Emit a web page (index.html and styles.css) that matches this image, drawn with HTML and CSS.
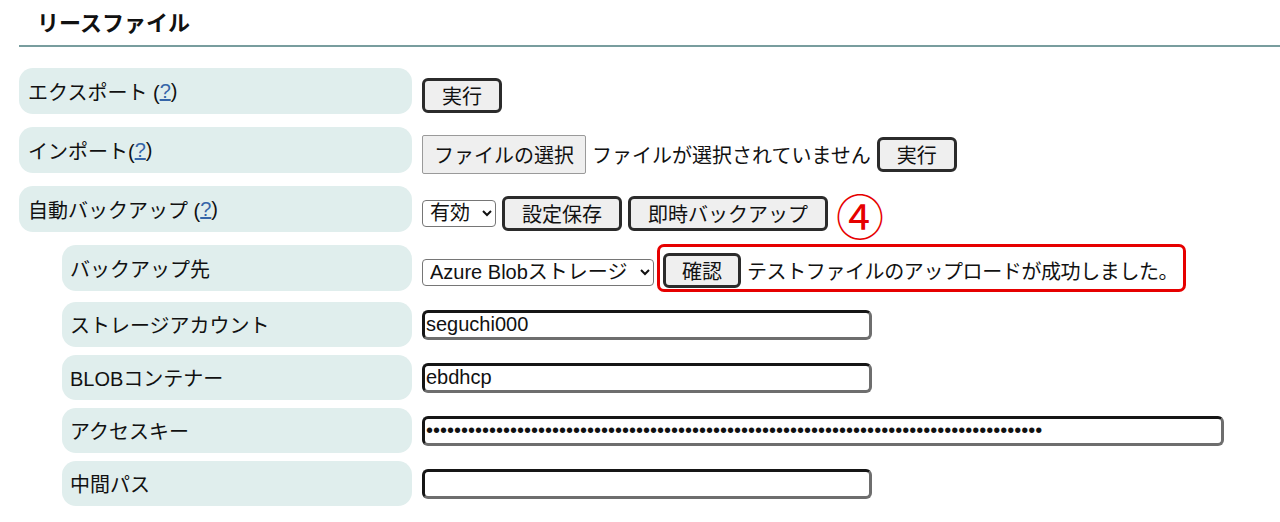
FILE: index.html
```html
<!DOCTYPE html>
<html lang="ja">
<head>
    <meta charset="UTF-8">
    <meta name="viewport" content="width=device-width, initial-scale=1.0">
    <title>リースファイル</title>
    <link rel="stylesheet" href="styles.css">
</head>
<body>
    <h2 class="page-title">リースファイル</h2>

    <div class="settings">
        <div class="row top">
            <div class="label">エクスポート (<a href="#" class="help">?</a>)</div>
            <div class="controls shifted">
                <button class="btn">実行</button>
            </div>
        </div>

        <div class="row top">
            <div class="label">インポート(<a href="#" class="help">?</a>)</div>
            <div class="controls shifted">
                <button class="file-btn">ファイルの選択</button>
                <span>ファイルが選択されていません</span>
                <button class="btn">実行</button>
            </div>
        </div>

        <div class="row top">
            <div class="label">自動バックアップ (<a href="#" class="help">?</a>)</div>
            <div class="controls shifted">
                <select class="sel">
                    <option>有効</option>
                    <option>無効</option>
                </select>
                <button class="btn">設定保存</button>
                <button class="btn">即時バックアップ</button>
                <span class="marker">④</span>
            </div>
        </div>

        <div class="row top sub">
            <div class="label">バックアップ先</div>
            <div class="controls shifted">
                <select class="sel">
                    <option>Azure Blobストレージ</option>
                </select>
                <span class="callout">
                    <button class="btn">確認</button>
                    <span class="callout-text">テストファイルのアップロードが成功しました。</span>
                </span>
            </div>
        </div>

        <div class="row sub first-field">
            <div class="label">ストレージアカウント</div>
            <div class="controls">
                <input type="text" class="field" value="seguchi000">
            </div>
        </div>

        <div class="row sub">
            <div class="label">BLOBコンテナー</div>
            <div class="controls">
                <input type="text" class="field" value="ebdhcp">
            </div>
        </div>

        <div class="row sub">
            <div class="label">アクセスキー</div>
            <div class="controls">
                <input type="password" class="field wide" value="xxxxxxxxxxxxxxxxxxxxxxxxxxxxxxxxxxxxxxxxxxxxxxxxxxxxxxxxxxxxxxxxxxxxxxxxxxxxxxxxxxxxxxxx">
            </div>
        </div>

        <div class="row sub">
            <div class="label">中間パス</div>
            <div class="controls">
                <input type="text" class="field" value="">
            </div>
        </div>
    </div>
</body>
</html>
```

FILE: styles.css
```css
body {
    margin: 0;
    font-family: "Liberation Sans", "Noto Sans CJK JP", sans-serif;
    font-size: 20px;
    color: #111;
    background: #fff;
}

.page-title {
    margin: 0 0 0 19px;
    padding: 10px 0 7px 18px;
    font-size: 22px;
    line-height: 28px;
    font-weight: bold;
    border-bottom: 2px solid #789d9e;
}

.settings {
    padding: 21px 0 0 19px;
}

.row {
    display: flex;
    align-items: flex-start;
    margin-top: 8px;
}

.row.top {
    margin-top: 13px;
}

.row.top:first-child {
    margin-top: 0;
}

.row.first-field {
    margin-top: 11px;
}

.label {
    width: 384px;
    height: 45px;
    padding-left: 9px;
    display: flex;
    align-items: center;
    background: #e0eeed;
    border-radius: 14px;
    white-space: nowrap;
}

.row.top .label {
    height: 46px;
}

.row.sub .label {
    margin-left: 43px;
    width: 342px;
    padding-left: 8px;
}

.help {
    color: #3565a8;
    text-decoration: underline;
}

.controls {
    display: flex;
    align-items: center;
    gap: 6px;
    height: 45px;
    box-sizing: border-box;
    margin-left: 10px;
    white-space: nowrap;
}

.controls.shifted {
    height: 46px;
    padding-top: 8px;
}

.btn {
    font: inherit;
    color: #111;
    height: 35px;
    padding: 0 17px;
    background: #efefef;
    border: 3px solid #2b2b2b;
    border-radius: 6px;
}

.file-btn {
    font: inherit;
    color: #111;
    height: 39px;
    padding: 0 11px;
    background: #efefef;
    border: 1px solid #9a9a9a;
    border-radius: 2px;
}

.sel {
    font: inherit;
    color: #111;
    height: 27px;
    padding: 0 9px 0 3px;
    background: #fff;
    border: 1px solid #767676;
    border-radius: 4px;
}

.marker {
    color: #e60000;
    font-family: "Noto Sans CJK JP", sans-serif;
    font-size: 48px;
    line-height: 1;
    margin: 2px 0 0 2px;
}

.callout {
    display: inline-flex;
    align-items: center;
    gap: 6px;
    margin: -8px 0 0 -3px;
    padding: 6px 5px 1px 3px;
    border: 3px solid #e60000;
    border-radius: 7px;
}

.callout .btn {
    padding: 0 16px;
}

.callout-text {
    letter-spacing: -0.4px;
}

.field {
    font: inherit;
    color: #111;
    width: 450px;
    height: 30px;
    box-sizing: border-box;
    padding: 0 1px;
    border: 3px solid;
    border-color: #161616 #6e6e6e #6e6e6e #161616;
    border-radius: 6px;
    background: #fff;
}

.field.wide {
    width: 802px;
}
```
